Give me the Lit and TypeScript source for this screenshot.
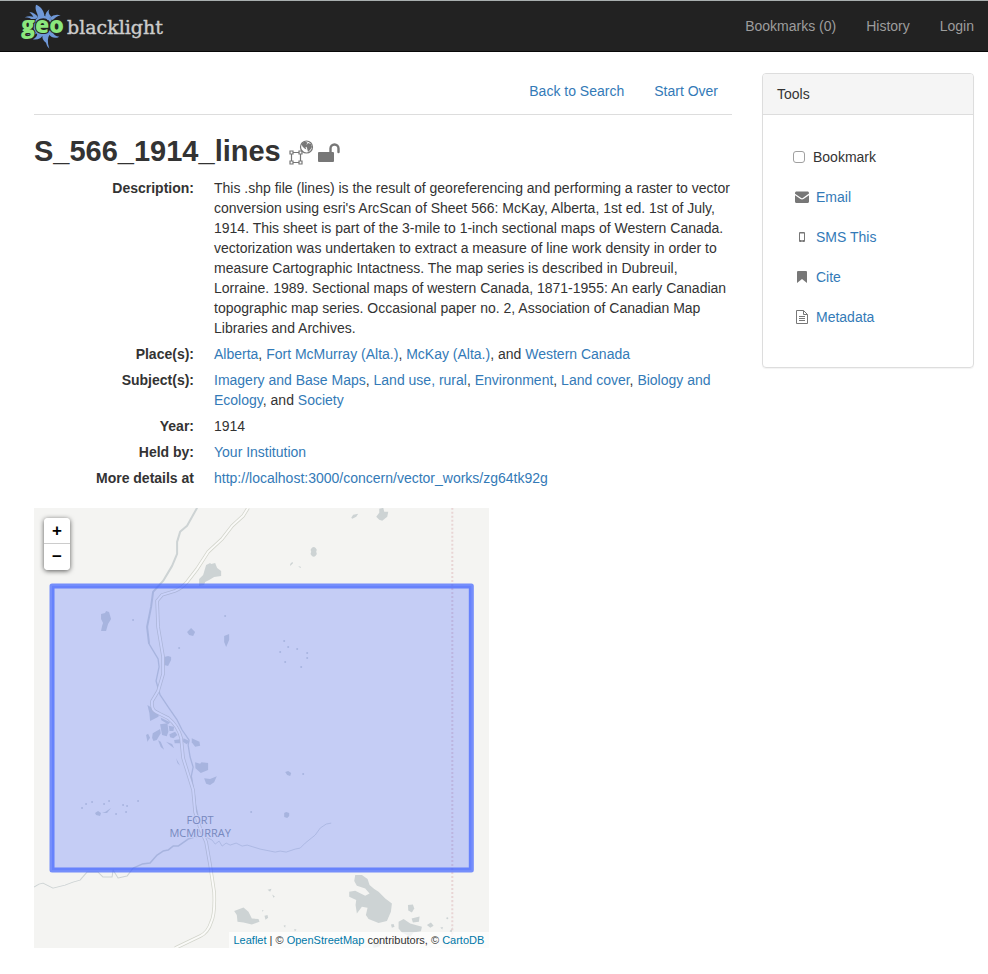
import { LitElement, html, css, svg } from "lit";
import { customElement, state } from "lit/decorators.js";

const LAKES = [
  "M206 565l4 -2 1 1 4 -1 2 5 4 3 0 5 -7 1 -5 3 -4 2 -1 3 -5 1 0 -7 4 -4z",
  "M101 614l4 -1 1 -2 3 1 2 7 -3 5 -2 7 -5 0 1 -5 1 -3 -2 -4z",
  "M187 632l4 -4 4 4 -2 4 -4 -1z",
  "M224 636l5 -2 0 6 -3 7 -2 -5z",
  "M164 657l4 -1 3 1 0 3 -3 6 -4 -1z",
  "M376 517l3 -4 0 -4 4 -1 1 4 4 0 -1 5 -5 4 -3 -1z",
  "M351 518l2 -3 5 -1 -2 3 -4 2z",
  "M311 552a3 3 0 1 1 5 0a3 3 0 1 1 -5 0z",
  "M290 564l2 -2 1 1 -3 3z M298 566l3 1 -1 1z",
  "M285 772l3 -1 3 2 -1 3 -3 -1z",
  "M284 813l2 -1 3 1 0 3 -2 2 -3 -1z",
  "M95 813l3 -2 3 2 -1 3 -4 -1z M102 813l3 -1 6 -4 -4 5z",
];

const MINE_PONDS = [
  "M22 30L35 38L58 50L55 65L42 72L30 78L28 55z",
  "M60 88L82 85L85 110L80 124L66 120z",
  "M38 115L60 102L62 115L50 135L40 138L36 128z",
  "M18 120L24 116L30 128L22 140z",
  "M86 92L102 95L100 108L88 108z",
  "M88 118L105 110L112 120L100 130L90 127z",
  "M102 135L120 133L120 145L104 145z",
  "M130 130L148 138L140 148L128 140z",
  "M155 130L178 140L180 152L165 155L155 142z",
  "M165 202L180 206L184 202L204 204V225L182 234L166 220z",
  "M192 250L210 252L230 244L222 262L210 270L198 266z",
  "M54 136L62 140L72 164L62 156z M78 140L96 147L102 160L92 152z",
  "M62 68L90 82L84 88L64 76z M108 190L120 212L112 204z",
];

const SOUTH_LAKES = [
  "M315 450L335 450L352 462L358 480L372 492L385 500L405 520L425 535L422 560L410 588L385 594L355 582L347 570L352 548L335 545L320 565L316 540L318 525L297 515L297 500L315 497L345 512L358 505L345 490L320 482L312 468z",
  "M445 590L460 582L480 595L515 605L512 618L490 622L480 635L455 622L445 610z",
  "M473 540L488 538L492 550L485 562L474 556z",
  "M484 580L508 574L506 590L488 592z M530 600L542 592L550 602L540 608z",
  "M422 598L430 597L433 605L425 608z M365 655L385 650L400 652L385 665L370 668z",
  "M570 607L578 606L576 613z M598 618L608 606L604 622z",
  "M-48 558L-20 547L-5 560L5 580L25 582L28 590L5 598L-20 592L-38 590L-40 570z",
  "M43 572L52 570L54 578L46 584z M52 494L64 491L60 500z M66 508L74 514L70 518z",
  "M100 602L106 600L105 608z M132 612L139 613L134 619z M35 556L40 555L38 560z",
];

const SPECKS: number[][] = [
  [133, 620], [225, 616], [179, 648], [284, 641], [288, 647], [297, 649],
  [280, 652], [307, 653], [307, 658], [285, 662], [301, 667], [303, 774],
  [251, 812], [82, 808], [86, 804], [92, 802], [104, 804], [109, 801],
  [123, 805], [127, 806], [138, 801], [126, 812], [116, 814], [447, 918],
];

const ROAD =
  "M248 508L243 516L232 526L222 539L208 552L197 569L187 582Q182 588 175 591L162 595L157 601L158 627L163 657L163 674L158 691L152 701Q151 710 156 712L168 718Q178 726 181 738L183 758L193 790L195 812L200 828L206 842L210 865L214 892Q215 914 211 922Q208 932 200 936L175 948";

const SUN_RAYS = [
  "M54 8C70 14 80 28 80 48L58 48C64 36 48 28 54 8z",
  "M94 22Q88 34 100 44L88 54Q74 38 94 22z",
  "M128 40Q110 34 94 48L104 56Q112 44 128 40z",
  "M34 30Q52 32 60 46L50 52Q46 40 34 30z",
  "M20 46Q38 38 54 48L46 56Q36 46 20 46z",
  "M24 98Q36 98 46 86L56 94Q44 108 24 98z",
  "M44 112Q58 106 58 94L74 98Q70 114 44 112z",
  "M74 96L96 96Q84 112 94 140Q86 134 84 122Q70 114 74 96z",
  "M92 96L104 88Q108 104 124 104Q106 114 92 96z",
];

const TOOLS: { label: string; icon: unknown }[] = [
  {
    label: "Email",
    icon: svg`<path fill="#777" d="M0 3C0 2.200 .7 1.500 1.500 1.500h11c.8 0 1.500 .7 1.500 1.500v.6L7.800 8Q7 8.500 6.200 8L0 3.800zM0 5.200l5.500 3.900Q7 10 8.500 9.100L14 5.200v6.300c0 .9-.6 1.500-1.500 1.500h-11C.6 13 0 12.400 0 11.500z"/>`,
  },
  {
    label: "SMS This",
    icon: svg`<path fill="#777" fill-rule="evenodd" d="M5 2h4q1 0 1 1v8q0 1-1 1H5q-1 0-1-1V3q0-1 1-1zM5 3.500v6.500h4V3.500zM6.500 10.600v.8h1v-.8z"/>`,
  },
  {
    label: "Cite",
    icon: svg`<path fill="#777" d="M3 1h8q1 0 1 1v11L7 9l-5 4V2q0-1 1-1z"/>`,
  },
  {
    label: "Metadata",
    icon: svg`<path fill="none" stroke="#777" d="M1.500 .5h7l4 4v9h-11zM8.500 .5v4h4M4 6.500h6M4 8.500h6M4 10.500h6"/>`,
  },
];

const link = (label: string) => html`<a href="#">${label}</a>`;

@customElement("app-root")
export class AppRoot extends LitElement {
  @state() private bookmarked = false;

  static styles = css`
    :host {
      display: block;
      font: 14px/20px "Liberation Sans", Arial, sans-serif;
      color: #333;
      background: #fff;
    }
    * { box-sizing: border-box; }
    a { color: #337ab7; text-decoration: none; }
    a:hover { text-decoration: underline; }
    .navbar {
      display: flex;
      align-items: center;
      justify-content: space-between;
      height: 52px;
      padding: 0 14px 0 20px;
      background: #222;
      border-top: 1px solid #a9afaf;
      border-bottom: 1px solid #080808;
    }
    .brand { display: flex; }
    .nav { display: flex; gap: 30px; }
    .nav a { color: #9d9d9d; }
    .page {
      display: grid;
      grid-template-columns: minmax(0, 1fr) 212px;
      gap: 30px;
      align-items: start;
      padding: 21px 14px 26px 34px;
    }
    .search-nav {
      display: flex;
      justify-content: flex-end;
      gap: 30px;
      padding: 8px 14px 13px;
      border-bottom: 1px solid #ddd;
    }
    h1 {
      display: flex;
      align-items: center;
      gap: 8px;
      margin: 20px 0 10px;
      font-size: 29px;
      line-height: 33px;
      font-weight: 700;
    }
    .type-icons { display: flex; gap: 4px; }
    dl {
      display: grid;
      grid-template-columns: 160px minmax(0, 1fr);
      gap: 6px 20px;
      margin: 0 0 20px;
    }
    dt { font-weight: 700; text-align: right; }
    dd { margin: 0; }
    .map {
      position: relative;
      width: calc((100% + 30px) * 2 / 3 - 30px);
      height: 440px;
      overflow: hidden;
      background: #f4f4f2;
    }
    .tiles { display: block; width: 100%; height: 100%; }
    .zoom {
      position: absolute;
      top: 10px;
      left: 10px;
      width: 26px;
      border-radius: 4px;
      box-shadow: 0 1px 5px rgba(0, 0, 0, 0.65);
      overflow: hidden;
    }
    .zoom button {
      display: block;
      width: 26px;
      height: 26px;
      padding: 0;
      border: 0;
      background: #fff;
      color: #000;
      font: bold 17px/26px "Liberation Sans", Arial, sans-serif;
    }
    .zoom button:first-child { border-bottom: 1px solid #ccc; }
    .attribution {
      position: absolute;
      right: 0;
      bottom: 0;
      padding: 0 5px;
      background: rgba(255, 255, 255, 0.7);
      font-size: 11px;
      line-height: 16px;
      white-space: nowrap;
    }
    .attribution a { color: #0078a8; }
    .panel {
      border: 1px solid #ddd;
      border-radius: 4px;
      box-shadow: 0 1px 1px rgba(0, 0, 0, 0.05);
    }
    h2 {
      margin: 0;
      padding: 10px 14px;
      border-bottom: 1px solid #ddd;
      border-radius: 3px 3px 0 0;
      background: #f5f5f5;
      font-size: 14px;
      line-height: 20px;
      font-weight: 400;
    }
    .tools {
      display: grid;
      gap: 20px;
      margin: 0;
      padding: 32px 30px 40px;
      list-style: none;
    }
    .tools label { display: flex; align-items: center; gap: 8px; }
    .tools input {
      appearance: none;
      width: 12px;
      height: 12px;
      margin: 0;
      border: 1px solid #a0a0a0;
      border-radius: 3px;
      background: #fff;
    }
    .tools input:checked { background: #337ab7; }
    .tools a { display: flex; align-items: center; gap: 7px; padding-left: 2px; }
  `;

  private renderLogo() {
    return html`
      <svg width="146" height="50" viewBox="20 1 146 50" role="img" aria-label="geoblacklight">
        <g fill="#6f98d8" transform="translate(18 2) scale(.3333)">
          ${SUN_RAYS.map((d) => svg`<path d=${d} />`)}
          <circle cx="76" cy="72" r="27" fill="none" stroke="#6f98d8" stroke-width="7"/>
        </g>
        <text x="21" y="33" font-family="Open Sans" font-weight="800" font-size="23" fill="#8be77d" stroke="#222" stroke-width="2" paint-order="stroke">geo</text>
        <text x="67" y="34" font-family="DejaVu Serif" font-size="19" fill="#ccc" stroke="#ccc" stroke-width=".4">blacklight</text>
      </svg>`;
  }

  private renderTypeIcons() {
    return html`<span class="type-icons">
      <svg width="25" height="26" viewBox="0 0 25 26" role="img" aria-label="Line data">
        <g fill="none" stroke="#777" stroke-width="1.2">
          <path d="M4 13.500h6M4 23.500h6M2.500 15v7M11.500 15v7"/>
          <path d="M1 12h3v3H1zM10 12h3v3h-3zM1 22h3v3H1zM10 22h3v3h-3z"/>
          <circle cx="17.500" cy="8" r="6"/>
        </g>
        <path fill="#777" d="M12.500 5l3-2.500 3 1-1 2 1 1-2 2 1 2-2-1-2-2zM19 4l3 1 1 3-2 3-2 2-1-4-1-2z"/>
      </svg>
      <svg width="23" height="26" viewBox="0 0 23 26" role="img" aria-label="Public">
        <rect x="0" y="13" width="16" height="10" rx="1" fill="#777"/>
        <path d="M12.500 13V9.500a4 4 0 0 1 8 0V13" fill="none" stroke="#777" stroke-width="2.400" stroke-linecap="round"/>
      </svg>
    </span>`;
  }

  private renderMap() {
    return html`<svg class="tiles" viewBox="34 508 455 440" preserveAspectRatio="xMidYMid slice" role="img" aria-label="Map of Fort McMurray">
      <g fill="#cdd3d4">
        ${LAKES.map((d) => svg`<path d=${d} />`)}
        ${SPECKS.map(([x, y]) => svg`<circle cx=${x} cy=${y} r="1" />`)}
        <g transform="translate(140 695) scale(.3333)">
          ${MINE_PONDS.map((d) => svg`<path d=${d} />`)}
        </g>
        <g transform="translate(250 725) scale(.3333)">
          ${SOUTH_LAKES.map((d) => svg`<path d=${d} />`)}
        </g>
      </g>
      <g fill="none" stroke="#cdd3d4" stroke-linejoin="round">
        <path stroke-width="2" d="M197 508L192 517L187 526L180 532L177 542L177 554L172 566L163 581L153 592L151 607L147 627L149 644"/>
        <path stroke-width="1.300" d="M149 644L158 659L159 667L156 681L160 695L168 707L177 720L182 730L189 740L188 745L190 757L193 767L191 777L194 795"/>
        <path stroke-width="2" d="M191 777L194 795L195 805L198 818L200 832"/>
        <path d="M34 887L39 884L43 883L53 888L65 885L73 882L80 880L87 872L98 872L103 877L112 877L113 870L118 878L127 876L133 868"/>
        <path stroke-width="1.500" d="M133 868L142 864L150 863L157 855L163 851L168 850L173 846L178 846L188 839L198 836"/>
        <path stroke-width=".8" d="M204 836L212 840L215 844L219 841L222 846L226 843L230 845L236 843L242 846L247 845L260 849L270 851L275 852L280 851L286 852L295 849L300 848L305 843L315 835L320 828L326 824L331 823"/>
      </g>
      <path d=${ROAD} fill="none" stroke="#d2d4cb" stroke-width="3.500"/>
      <path d=${ROAD} fill="none" stroke="#fafaf8" stroke-width="2"/>
      <path d="M452 508V948" stroke="#e9d5d5" stroke-width="2" stroke-dasharray="2 2"/>
      <g font-family="Open Sans" font-size="11" text-anchor="middle" fill="#8d99a8" stroke="#f4f4f2" stroke-width="2" paint-order="stroke">
        <text x="200" y="824">FORT</text>
        <text x="200" y="837">MCMURRAY</text>
      </g>
      <rect x="52" y="586" width="419" height="284" fill="#3858ff" fill-opacity=".25" stroke="#3f63ff" stroke-opacity=".7" stroke-width="5" stroke-linejoin="round"/>
    </svg>`;
  }

  render() {
    return html`
      <header class="navbar">
        <a class="brand" href="#">${this.renderLogo()}</a>
        <nav class="nav">${["Bookmarks (0)", "History", "Login"].map(link)}</nav>
      </header>
      <div class="page">
        <main>
          <nav class="search-nav">${["Back to Search", "Start Over"].map(link)}</nav>
          <h1>S_566_1914_lines ${this.renderTypeIcons()}</h1>
          <dl>
            <dt>Description:</dt>
            <dd>This .shp file (lines) is the result of georeferencing and performing a raster to vector conversion using esri's ArcScan of Sheet 566: McKay, Alberta, 1st ed. 1st of July, 1914. This sheet is part of the 3-mile to 1-inch sectional maps of Western Canada. vectorization was undertaken to extract a measure of line work density in order to measure Cartographic Intactness. The map series is described in Dubreuil, Lorraine. 1989. Sectional maps of western Canada, 1871-1955: An early Canadian topographic map series. Occasional paper no. 2, Association of Canadian Map Libraries and Archives.</dd>
            <dt>Place(s):</dt>
            <dd>${link("Alberta")}, ${link("Fort McMurray (Alta.)")}, ${link("McKay (Alta.)")}, and ${link("Western Canada")}</dd>
            <dt>Subject(s):</dt>
            <dd>${link("Imagery and Base Maps")}, ${link("Land use, rural")}, ${link("Environment")}, ${link("Land cover")}, ${link("Biology and Ecology")}, and ${link("Society")}</dd>
            <dt>Year:</dt>
            <dd>1914</dd>
            <dt>Held by:</dt>
            <dd>${link("Your Institution")}</dd>
            <dt>More details at</dt>
            <dd>${link("http://localhost:3000/concern/vector_works/zg64tk92g")}</dd>
          </dl>
          <div class="map">
            ${this.renderMap()}
            <div class="zoom">
              <button type="button" aria-label="Zoom in">+</button>
              <button type="button" aria-label="Zoom out">−</button>
            </div>
            <div class="attribution">${link("Leaflet")} | © ${link("OpenStreetMap")} contributors, © ${link("CartoDB")}</div>
          </div>
        </main>
        <aside class="panel">
          <h2>Tools</h2>
          <ul class="tools">
            <li>
              <label>
                <input type="checkbox" .checked=${this.bookmarked} @change=${() => (this.bookmarked = !this.bookmarked)} />
                Bookmark
              </label>
            </li>
            ${TOOLS.map((t) => html`<li><a href="#"><svg width="14" height="14" viewBox="0 0 14 14" aria-hidden="true">${t.icon}</svg>${t.label}</a></li>`)}
          </ul>
        </aside>
      </div>
    `;
  }
}
